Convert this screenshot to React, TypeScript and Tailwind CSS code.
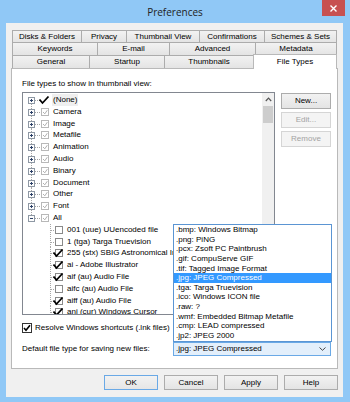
import React from "react";

type TopRow = { label: string; state: "checked" | "gray"; expanded?: boolean; selected?: boolean };
type ChildRow = { label: string; checked: boolean };

const topRows: TopRow[] = [
  { label: "(None)", state: "checked", selected: true },
  { label: "Camera", state: "gray" },
  { label: "Image", state: "gray" },
  { label: "Metafile", state: "gray" },
  { label: "Animation", state: "gray" },
  { label: "Audio", state: "gray" },
  { label: "Binary", state: "gray" },
  { label: "Document", state: "gray" },
  { label: "Other", state: "gray" },
  { label: "Font", state: "gray" },
  { label: "All", state: "gray", expanded: true },
];

const childRows: ChildRow[] = [
  { label: "001 (uue) UUencoded file", checked: false },
  { label: "1 (tga) Targa Truevision", checked: false },
  { label: "255 (stx) SBIG Astronomical Image", checked: true },
  { label: "ai - Adobe Illustrator", checked: true },
  { label: "aif (au) Audio File", checked: true },
  { label: "aifc (au) Audio File", checked: false },
  { label: "aiff (au) Audio File", checked: true },
  { label: "ani (cur) Windows Cursor", checked: true },
];

const dropItems = [
  ".bmp: Windows Bitmap",
  ".png: PiNG",
  ".pcx: Zsoft PC Paintbrush",
  ".gif: CompuServe GIF",
  ".tif: Tagged Image Format",
  ".jpg: JPEG Compressed",
  ".tga: Targa Truevision",
  ".ico: Windows ICON file",
  ".raw: ?",
  ".wmf: Embedded Bitmap Metafile",
  ".cmp: LEAD compressed",
  ".jp2: JPEG 2000",
];

const H = 11.8;

function TopGutter({ idx, last, row }: { idx: number; last: boolean; row: TopRow }) {
  return (
    <svg width="30" height={H} viewBox={`0 0 30 ${H}`} className="shrink-0">
      <line x1="8.5" y1={idx === 0 ? 6 : 0} x2="8.5" y2={last ? 6 : H} stroke="#a5a5a5" strokeDasharray="1 1" />
      <line x1="12" y1="6.5" x2="18" y2="6.5" stroke="#a5a5a5" strokeDasharray="1 1" />
      <rect x="5.5" y="3.5" width="6" height="6" fill="#fdfdfd" stroke="#8e98a4" />
      <path d="M7 6.5 H10" stroke="#2a3f66" />
      {!row.expanded && <path d="M8.5 5 V8" stroke="#2a3f66" />}
      {row.state === "gray" ? (
        <>
          <rect x="18.5" y="2.5" width="7" height="7" fill="#fff" stroke="#b8b8b8" />
          <path d="M20 6 L21.8 7.8 L24.3 4.2" fill="none" stroke="#b0b0b0" strokeWidth="1" />
        </>
      ) : (
        <path d="M16.5 5.5 L19.5 9 L25.5 2.5" fill="none" stroke="#000" strokeWidth="1.8" />
      )}
    </svg>
  );
}

function ChildGutter({ checked }: { checked: boolean }) {
  return (
    <svg width="44" height={H} viewBox={`0 0 44 ${H}`} className="shrink-0">
      <line x1="27.5" y1="0" x2="27.5" y2={H} stroke="#a5a5a5" strokeDasharray="1 1" />
      <line x1="28" y1="6.5" x2="32" y2="6.5" stroke="#a5a5a5" strokeDasharray="1 1" />
      <rect x="32.5" y="2.5" width="7" height="7" fill="#fff" stroke="#8a8a8a" />
      {checked && <path d="M30.5 5.5 L33.5 9 L39.5 2.5" fill="none" stroke="#000" strokeWidth="1.8" />}
    </svg>
  );
}

function Tab({ label, w, first, active }: { label: string; w: string; first?: boolean; active?: boolean }) {
  if (active) {
    return (
      <div
        className={`${w} -ml-px -mt-px h-[15px] relative z-10 bg-white border border-b-0 border-[#b9b9b9] flex items-center justify-center text-[8px] leading-none`}
      >
        {label}
      </div>
    );
  }
  return (
    <div
      className={`${w} ${first ? "" : "-ml-px"} h-full border border-b-0 border-[#acacac] bg-gradient-to-b from-[#f2f2f2] to-[#e4e4e4] flex items-center justify-center text-[8px] leading-none whitespace-nowrap`}
    >
      {label}
    </div>
  );
}

function WinButton({ label, disabled, isDefault, w }: { label: string; disabled?: boolean; isDefault?: boolean; w: string }) {
  const cls = disabled
    ? "border-[#d5d5d5] bg-[#f4f4f4] text-[#a3a3a3]"
    : isDefault
    ? "border-[#6aa9e6] bg-gradient-to-b from-[#f2f2f2] to-[#e6e6e6] text-black"
    : "border-[#acacac] bg-gradient-to-b from-[#f2f2f2] to-[#e4e4e4] text-black";
  return (
    <div className={`${w} border ${cls} flex items-center justify-center text-[8px] leading-none`}>{label}</div>
  );
}

export default function App() {
  return (
    <div className="w-[350px] h-[402px] bg-[#90c8f6] flex flex-col font-['Liberation_Sans',Arial,sans-serif] text-black overflow-hidden">
      <div className="h-[23px] relative flex items-center justify-center">
        <span className="font-['Open_Sans',sans-serif] text-[10px] text-[#222] leading-none">Preferences</span>
        <div className="absolute right-[5px] top-0 w-[23px] h-[16px] bg-[#c75050] flex items-center justify-center">
          <svg width="7" height="7" viewBox="0 0 7 7">
            <path d="M0.5 0.5 L6.5 6.5 M6.5 0.5 L0.5 6.5" stroke="#fff" strokeWidth="1.4" />
          </svg>
        </div>
      </div>

      <div className="flex-1 ml-[6px] mr-[7px] mb-[5px] bg-[#f0f0f0] flex flex-col pt-[7px]">
        <div className="ml-[5px] w-[327px] flex flex-col">
          <div className="flex h-[12px] px-px">
            <Tab first label="Disks & Folders" w="w-[70px]" />
            <Tab label="Privacy" w="w-[46px]" />
            <Tab label="Thumbnail View" w="w-[74px]" />
            <Tab label="Confirmations" w="w-[66px]" />
            <Tab label="Schemes & Sets" w="flex-1" />
          </div>
          <div className="flex h-[13px] px-px">
            <Tab first label="Keywords" w="w-[86px]" />
            <Tab label="E-mail" w="w-[73px]" />
            <Tab label="Advanced" w="w-[87px]" />
            <Tab label="Metadata" w="flex-1" />
          </div>
          <div className="flex items-start h-[13px] px-px">
            <Tab first label="General" w="w-[78px]" />
            <Tab label="Startup" w="w-[76px]" />
            <Tab label="Thumbnails" w="w-[90px]" />
            <Tab active label="File Types" w="flex-1" />
          </div>

          <div className="h-[301px] bg-white border border-[#b9b9b9] pl-[10px] pr-[6px] pt-[10px] flex flex-col">
            <div className="text-[8px] leading-[10px] h-[10px] whitespace-nowrap">File types to show in thumbnail view:</div>
            <div className="mt-[3px] flex gap-[6px]">
              <div className="w-[253px] h-[223px] border border-[#828790] flex bg-white overflow-hidden">
                <div className="flex-1 pt-px overflow-hidden flex flex-col">
                  {topRows.map((r, i) => (
                    <div key={r.label} className="h-[11.8px] shrink-0 flex items-center">
                      <TopGutter idx={i} last={i === topRows.length - 1} row={r} />
                      <span
                        className={`text-[8px] leading-[11.8px] whitespace-nowrap ${r.selected ? "bg-[#efefef] px-px -ml-px" : ""}`}
                      >
                        {r.label}
                      </span>
                    </div>
                  ))}
                  {childRows.map((r) => (
                    <div key={r.label} className="h-[11.8px] shrink-0 flex items-center">
                      <ChildGutter checked={r.checked} />
                      <span className="text-[8px] leading-[11.8px] whitespace-nowrap">{r.label}</span>
                    </div>
                  ))}
                </div>
                <div className="w-[12px] bg-[#f0f0f0] flex flex-col items-center shrink-0">
                  <div className="h-[12px] w-full flex items-center justify-center">
                    <svg width="7" height="5" viewBox="0 0 7 5">
                      <path d="M0.8 4 L3.5 1.2 L6.2 4" fill="none" stroke="#555" strokeWidth="1.2" />
                    </svg>
                  </div>
                  <div className="mt-px w-[10px] h-[17px] bg-[#cdcdcd]" />
                </div>
              </div>
              <div className="w-[50px] flex flex-col gap-[3px] pt-px">
                <WinButton label="New..." w="h-[16px]" />
                <WinButton label="Edit..." disabled w="h-[16px]" />
                <WinButton label="Remove" disabled w="h-[16px]" />
              </div>
            </div>

            <div className="mt-[7px] h-[11px] flex items-center gap-[3px]">
              <svg width="10" height="10" viewBox="0 0 10 10" className="shrink-0">
                <rect x="0.5" y="0.5" width="9" height="9" fill="#fff" stroke="#333" />
                <path d="M2 5 L4 7.3 L8 2.2" fill="none" stroke="#000" strokeWidth="1.6" />
              </svg>
              <span className="text-[8px] leading-none whitespace-nowrap">Resolve Windows shortcuts (.lnk files)</span>
            </div>

            <div className="mt-[9px] h-[14px] flex items-center justify-between">
              <span className="text-[8px] leading-none whitespace-nowrap">Default file type for saving new files:</span>
              <div className="relative w-[158px] h-[14px] border border-[#6aa9e6] bg-[#e3effb] flex items-center pl-[2px] pr-[4px]">
                <span className="flex-1 text-[8px] leading-none whitespace-nowrap">.jpg: JPEG Compressed</span>
                <svg width="7" height="4" viewBox="0 0 7 4">
                  <path d="M0.5 0.5 L3.5 3.3 L6.5 0.5" fill="none" stroke="#444" strokeWidth="1" />
                </svg>
                <div className="absolute bottom-[13px] -left-px w-[159px] h-[118px] border border-[#5b95d3] bg-white flex flex-col z-20">
                  {dropItems.map((t) => (
                    <div
                      key={t}
                      className={`h-[9.65px] shrink-0 pl-[2px] text-[8px] leading-[9.65px] whitespace-nowrap ${
                        t.startsWith(".jpg") ? "bg-[#3399ff] text-white" : ""
                      }`}
                    >
                      {t}
                    </div>
                  ))}
                </div>
              </div>
            </div>
          </div>
        </div>

        <div className="mt-[6px] h-[15px] flex justify-end gap-[6px] pr-[5px]">
          <WinButton label="OK" isDefault w="w-[54px]" />
          <WinButton label="Cancel" w="w-[54px]" />
          <WinButton label="Apply" w="w-[54px]" />
          <WinButton label="Help" w="w-[54px]" />
        </div>
      </div>
    </div>
  );
}
